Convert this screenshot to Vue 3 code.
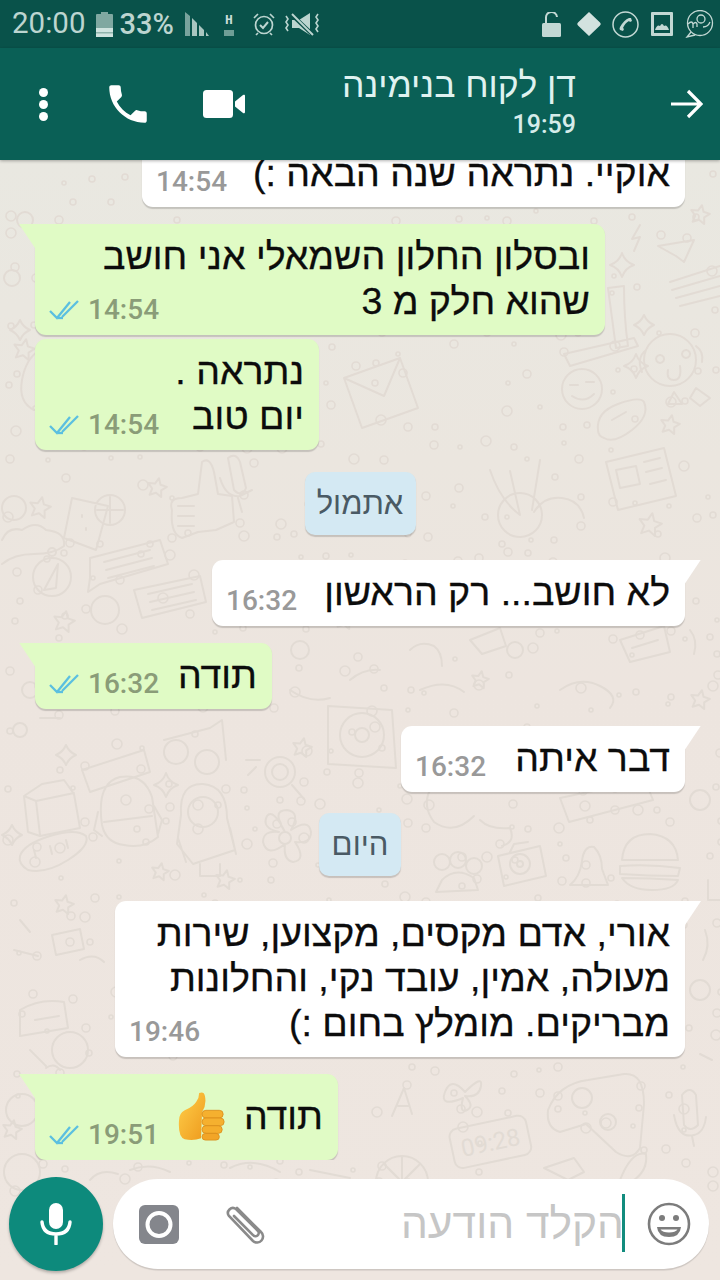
<script setup>
const c = (x, y, r) => `M${x - r} ${y}a${r} ${r} 0 1 0 ${2 * r} 0a${r} ${r} 0 1 0 ${-2 * r} 0`
const star = (x, y, r) => {
  let d = ''
  for (let i = 0; i < 10; i++) {
    const a = (Math.PI / 5) * i - Math.PI / 2 + 0.2
    const q = i % 2 ? r * 0.48 : r
    d += `${i ? 'L' : 'M'}${(x + q * Math.cos(a)).toFixed(1)} ${(y + q * Math.sin(a)).toFixed(1)}`
  }
  return d + 'Z'
}
const spark = (x, y, r) => `M${x} ${y - r}Q${x + 3} ${y - 3} ${x + r} ${y}Q${x + 3} ${y + 3} ${x} ${y + r}Q${x - 3} ${y + 3} ${x - r} ${y}Q${x - 3} ${y - 3} ${x} ${y - r}Z`

const doodles = [
  'M24 796l18-12 22-4 10 14 6 34-40 8-12-4z M24 796l12 5 38-8 M36 801l4 34',
  'M102 825q-6-42 18-48 24-4 32 20l6 40q-14 12-34 8-18-2-22-20z M98 812l-4 18 8 6 M154 806l8 14-4 14 M104 822l48-6 M82 770l62-20 6 22-60 20z',
  c(203, 812, 15) + 'M181 815q-2-32 22-31 24 2 24 34l8 32-42 14-16-20z M178 838l8 24 M230 828l6 26 M200 864v12h20v-12',
  'M20 856q4-12 30-20t36 0q4 10-18 24t-40 10q-10-6-8-14z M34 850l2 8 M50 846l2 8 M66 840l2 8',
  c(285, 838, 6) + 'M285 832q-14-22 2-22 14 2 4 20 18-12 20 2 0 12-16 10 12 18-2 20-10-2-8-18-18 14-22-2 0-12 16-10-18-4-12-16 6-8 18 16z',
  'M328 706l64 4 4 58-68-4z' + c(362, 735, 22) + c(362, 735, 7),
  c(280, 772, 15) + c(280, 772, 8) + 'M292 785l12 14 M246 760h14 M248 775l8-8',
  c(176, 752, 12) + c(207, 762, 12) + 'M164 740l46-12 12-8 4 40',
  star(225, 880, 10), star(302, 748, 10), star(64, 905, 10), star(160, 872, 9), spark(166, 785, 12), spark(12, 835, 10), spark(66, 755, 10),
  'M622 860q2-26 28-26 26 2 28 26z M620 866q30-2 60 2l-2 8q-30 0-58-2z M622 878q28 0 56 2-4 10-26 10t-30-12z',
  'M498 856l42-10 6 30-42 10z M510 852l4-8 14-2' + c(520, 864, 10) + c(520, 864, 3),
  'M570 885q10-8 12-24t12-14q8 8 8 22l6 16z',
  c(442, 862, 8) + c(458, 860, 8) + c(474, 866, 8) + 'M442 880q14-14 32-2l4 12-42 2z',
  'M560 798l85-18 8 20-84 22z',
  'M172 510q-4-12 10-12l16-4 4-32q8-6 12 10l4 22 14 2 2 26-18 8-18 2-16 6q-12-4-10-28z M178 506h16 M178 516h16 M178 526h16',
  'M72 498l36 8-12 44-32-12z' + c(110, 510, 15) + 'M110 497v26 M97 510h26 M82 515v2 M86 528v2',
  c(52, 577, 19) + c(52, 552, 4) + 'M44 590l14-26-2 24z',
  'M90 558l70-18 8 24-68 20-12 8 2-14z M104 562l46-12 M106 570l46-12 M108 578l46-12',
  'M134 590l66-14 6 26-64 16z M148 594l44-10 M150 602l44-10 M152 610l44-10',
  'M228 458q8-6 12 4l6 26q-4 10-12 2z M220 478q6 20 20 18l12-6 M238 498l4 14',
  'M2 540q6-14 20-10 14-10 24 0 20 2 18 16-10 8-30 8t-32 10',
  c(14, 508, 12), star(40, 508, 11), star(64, 622, 11), star(157, 488, 10),
  c(105, 610, 14),
  c(670, 360, 26) + 'M646 350q-10 8-4 22 M696 346q8 6 6 16 M660 355a4 4 0 1 0 .1 0 M686 350a4 4 0 1 0 .1 0 M668 370q-2 10 6 10t6-14 M674 392l-6 12h14z M696 388l-6 10 10 8 10-8z',
  c(582, 389, 20) + 'M570 385h8 M586 382h8 M572 396q12 8 22-2',
  'M598 430q-2-18 20-26t26-2q6 14-12 28t-28 8q-6-2-6-8z M612 420l14-8',
  'M606 462l58-14 12 48-58 14z M616 470l20-4 4 18-20 4z M644 462l16-4 M646 472l16-4 M650 484l16-4',
  'M344 378l56-20 18 50-56 20z M344 378l40 18 16-38',
  'M608 288l8 60 12-2q-4-28-4-60z M564 354l70-16 4 8-68 20z',
  'M658 246l36-6-10 22-8-6z',
  'M672 290l48-14 M676 298l44-12 M680 306l40-10 M670 282l50-16',
  star(700, 215, 10), spark(622, 265, 12), spark(644, 325, 10), spark(636, 366, 12), 'M640 225l-8 14 8-2-6 14',
  star(670, 425, 10), star(650, 525, 12),
  c(520, 515, 22) + 'M520 515l-10-44 M540 460l-8 50 M490 470q10 30 30 45',
  'M534 512q10-16 28-14t22 20',
  'M548 1110q10-26 40-30l36-6q20-2 20 30l-4 44q-8 14-24 4l-30-28-26 8q-14-4-12-22z' + c(582, 1098, 10) + c(608, 1122, 8),
  'M682 1095q8-10 14 0l2 30q-8 8-14 0z M674 1115q4 24 20 20 10-2 12-18 M692 1136l2 10',
  'M392 1116l12-28 8 26 M398 1106h10',
  'M465 1092q-14-16-20 0t18 6q-4 16 4 12t-2-14q14 2 16-10t-16 6z',
  c(402, 1182, 26) + 'M402 1156v26l-18-18 M402 1182l18-18',
  'M544 1168l30-10 10 14-16 8z M620 1180q12-30 26-26 2 16-12 26z',
  star(24, 350, 11), c(12, 278, 8), c(25, 220, 8), 'M40 350q-14 8-18 30t12 30', spark(20, 330, 10),
  star(12, 1130, 10), c(22, 1110, 16), c(22, 1172, 18), 'M90 1180q10-12 28-6',
  c(30, 690, 8), c(20, 730, 7), 'M60 718l-20 0',
  star(345, 620, 10), c(300, 650, 9), c(515, 650, 8), 'M470 640l30-12 6 18-24 8z', 'M620 640l44-14 6 26-40 10z M632 648l26-8', 'M560 690q20-14 40-4t10 22',
  'M410 650q10-10 24-4 8 6 8 20', 'M350 680q14-12 30-10', 'M290 690q20 14 40 8', 'M420 690q26-12 44 2', star(480, 680, 9), 'M690 630q8 10 4 24', star(700, 700, 10),
  'M480 820q10 10 30 8 6 14-8 18', c(700, 800, 10), 'M708 880v20h12', 'M430 790q-8 16 4 32 20 14 40-6',
  'M20 1010q20-12 44-8l4 26-48 8z M35 1020l24-4', 'M80 960q14-8 24 2', 'M20 920l10 12 M14 950l24 6', 'M52 935l28-6 4 20-28 6z', c(70, 1050, 18), 'M30 1050l16 16', c(700, 990, 10), 'M705 930q6 16-2 30', 'M712 1060l-12-6',
  'M60 1070q-6-8-14-2', 'M310 1170l40 8', 'M230 1168q24-12 50 4', 'M130 1170q20-8 40 2',
]

const dots = []
let seed = 17
const rnd = () => ((seed = (seed * 9301 + 49297) % 233280) / 233280)
for (let y = 172; y < 1180; y += 19) {
  for (let x = 6; x < 716; x += 26) {
    if (rnd() < 0.42) dots.push({ x: Math.round(x + rnd() * 16), y: Math.round(y + rnd() * 12), r: 2 + Math.round(rnd() * 3) })
  }
}

const messages = [
  { id: 1, kind: 'in', w: 543, lines: ['אוקיי. נתראה שנה הבאה :)'], time: '14:54', cut: true },
  { id: 2, kind: 'out', w: 570, lines: ['ובסלון החלון השמאלי אני חושב', 'שהוא חלק מ 3'], time: '14:54', first: true },
  { id: 3, kind: 'out', w: 284, lines: ['נתראה .', 'יום טוב'], time: '14:54' },
  { id: 4, kind: 'date', text: 'אתמול', w: 111 },
  { id: 5, kind: 'in', w: 473, lines: ['לא חושב... רק הראשון'], time: '16:32', first: true },
  { id: 6, kind: 'out', w: 237, lines: ['תודה'], time: '16:32', first: true },
  { id: 7, kind: 'in', w: 284, lines: ['דבר איתה'], time: '16:32', first: true },
  { id: 8, kind: 'date', text: 'היום', w: 82 },
  { id: 9, kind: 'in', w: 570, lines: ['אורי, אדם מקסים, מקצוען, שירות', 'מעולה, אמין, עובד נקי, והחלונות', 'מבריקים. מומלץ בחום :)'], time: '19:46', first: true },
  { id: 10, kind: 'out', w: 303, lines: ['תודה'], time: '19:51', first: true, thumb: true },
]
</script>

<template>
  <div class="phone">
    <div class="status">
      <div class="status-group">
        <span class="clock">20:00</span>
        <svg class="battery" width="17" height="26" viewBox="0 0 17 26">
          <path d="M5 1h7v2h4a1 1 0 0 1 1 1v21a1 1 0 0 1-1 1H1a1 1 0 0 1-1-1V4a1 1 0 0 1 1-1h4z" fill="#7fa8a1" />
          <rect y="17" width="17" height="9" fill="#cfe3df" />
          <rect y="21" width="17" height="1.5" fill="#8fb3ac" />
        </svg>
        <span class="pct">33%</span>
        <svg class="signal" width="24" height="24" viewBox="0 0 24 24" fill="#a9c6c0">
          <path d="M0 0l5 4v20H0z" opacity=".7" />
          <path d="M7 6l5 5v13H7z" />
          <path d="M14 13l5 5v6h-5z" />
          <path d="M21 20l3 4h-3z" />
        </svg>
        <span class="netw"><b>H</b><i></i></span>
        <svg class="alarm" width="22" height="24" viewBox="0 0 22 24" fill="none" stroke="#bcd5d0" stroke-width="1.7">
          <circle cx="11" cy="13" r="8.5" />
          <path d="M7 13l3 3 5-6" stroke-width="2" />
          <path d="M1 6l4-4M21 6l-4-4M5 21l-2 2M17 21l2 2" />
        </svg>
        <svg class="vib" width="36" height="26" viewBox="0 0 36 26" fill="none" stroke="#bcd5d0" stroke-width="1.6">
          <path d="M2 5l2 3-2 3 2 3-2 3 2 3" />
          <path d="M34 3l-2 3 2 3-2 3 2 3-2 3 2 3" />
          <path d="M8 9h7l11-7v22L15 17H8z" fill="#bcd5d0" stroke="none" />
          <path d="M7 3l22 21" stroke="#0a5048" stroke-width="4" />
          <path d="M8 3l21 21" stroke-width="2" />
        </svg>
      </div>
      <div class="status-group right">
        <svg width="20" height="25" viewBox="0 0 20 25" fill="#c3d8d4">
          <rect y="11" width="19" height="14" rx="1.5" />
          <path d="M4 11V6a5.5 5.5 0 0 1 11-1" fill="none" stroke="#c3d8d4" stroke-width="2" />
        </svg>
        <svg class="diamond" width="26" height="26" viewBox="0 0 26 26" fill="#d3e2df"><path d="M13 1l11 10.500a2 2 0 0 1 0 3L13 25 2 14.500a2 2 0 0 1 0-3z" /></svg>
        <svg width="27" height="27" viewBox="0 0 27 27" fill="none" stroke="#c3d8d4" stroke-width="1.5">
          <circle cx="13.500" cy="13.500" r="12.500" />
          <path d="M8 19q-1-1 0-3 4-7 9-9l2 0 1 3-2 1-1-1q-4 2-6 7l1 1-1 2z" fill="#c3d8d4" stroke="none" />
        </svg>
        <svg width="22" height="24" viewBox="0 0 22 24" fill="#c3d8d4">
          <path fill-rule="evenodd" d="M1 0h20a1 1 0 0 1 1 1v22a1 1 0 0 1-1 1H1a1 1 0 0 1-1-1V1a1 1 0 0 1 1-1zm2 3v18h16V3z" />
          <path d="M4 18q2-6 5-4 2-4 4 0 3-2 5 4z" />
        </svg>
        <svg width="29" height="28" viewBox="0 0 29 28" fill="none" stroke="#c3d8d4" stroke-width="1.300">
          <circle cx="15" cy="13" r="12.500" />
          <circle cx="16" cy="9" r="4" />
          <path d="M3 14q4-4 5 0v4M8 14q3-3 4 0v3M18 17q5 0 7-5M6 22l-4 5 8-2" />
        </svg>
      </div>
    </div>

    <header class="bar">
      <div class="dots"><i></i><i></i><i></i></div>
      <svg class="call" width="50" height="50" viewBox="0 0 24 24" fill="#fff">
        <path d="M6.620 10.790c1.440 2.830 3.760 5.140 6.590 6.590l2.200-2.200c.27-.27.67-.36 1.020-.24 1.120.37 2.330.57 3.570.57.55 0 1 .45 1 1V20c0 .55-.45 1-1 1-9.390 0-17-7.610-17-17 0-.55.45-1 1-1h3.500c.55 0 1 .45 1 1 0 1.250.2 2.450.57 3.570.11.35.03.74-.25 1.020l-2.200 2.200z" />
      </svg>
      <svg class="video" width="42" height="28" viewBox="0 0 42 28" fill="#fff">
        <rect x="0" y="0" width="30" height="28" rx="3.500" />
        <path d="M32 11.500l8-6.500a1.200 1.200 0 0 1 2 1v16a1.200 1.200 0 0 1-2 1l-8-6.500z" />
      </svg>
      <div class="contact" dir="rtl">
        <div class="name">דן לקוח בנימינה</div>
        <div class="seen">19:59</div>
      </div>
      <svg class="back" width="32" height="30" viewBox="0 0 32 30" fill="none" stroke="#fff" stroke-width="3.200">
        <path d="M0 15h29M17 2l13 13-13 13" />
      </svg>
    </header>

    <main class="chat" dir="rtl">
      <svg class="wall" width="720" height="1120" viewBox="0 160 720 1120" fill="none" stroke="#e2dbd4" stroke-width="2" stroke-linejoin="round" stroke-linecap="round" aria-hidden="true">
        <path v-for="(d, i) in doodles" :key="i" :d="d" />
        <circle v-for="(p, i) in dots" :key="'d' + i" :cx="p.x" :cy="p.y" :r="p.r" stroke-width="1.600" />
        <g transform="rotate(-12 490 1145)">
          <rect x="452" y="1122" width="78" height="40" rx="8" />
          <text x="491" y="1151" text-anchor="middle" fill="#e2dbd4" stroke="none" font-family="Roboto, sans-serif" font-size="24">09:28</text>
        </g>
      </svg>

      <div class="thread">
        <template v-for="m in messages" :key="m.id">
          <div v-if="m.kind === 'date'" class="chip" :style="{ width: m.w + 'px' }">{{ m.text }}</div>
          <div v-else class="bubble" :class="[m.kind, { first: m.first, tail: m.first, tall: m.thumb }]" :style="{ width: m.w + 'px' }">
            <div v-for="(l, i) in m.lines.slice(0, -1)" :key="i" class="line">{{ l }}</div>
            <div class="line last">
              <span class="txt">{{ m.lines[m.lines.length - 1] }}</span>
              <svg v-if="m.thumb" class="thumb" width="50" height="52" viewBox="0 0 52 54">
                <defs>
                  <linearGradient id="th" x1="0" y1="0" x2="1" y2="1">
                    <stop offset="0" stop-color="#ffcf4a" />
                    <stop offset="1" stop-color="#ee9a1d" />
                  </linearGradient>
                </defs>
                <path d="M1 30q0-8 6-11 9-4 12-9 3-4 3-9 5-2 6 3 2 9-3 17l-1 27q-8 3-17 1-7-2-6-19z" fill="url(#th)" />
                <rect x="25" y="19" width="22" height="8" rx="4" fill="#f5b02f" stroke="#d98a17" stroke-width=".8" />
                <rect x="25" y="27" width="23" height="8" rx="4" fill="#f5b02f" stroke="#d98a17" stroke-width=".8" />
                <rect x="25" y="35" width="21" height="8" rx="4" fill="#f5ad2c" stroke="#d98a17" stroke-width=".8" />
                <rect x="25" y="43" width="18" height="7" rx="3.500" fill="#f2a527" stroke="#d98a17" stroke-width=".8" />
              </svg>
              <span class="meta" dir="ltr">
                <svg v-if="m.kind === 'out'" class="ticks" width="31" height="20" viewBox="0 0 31 20" fill="none" stroke="#5bbfe0" stroke-width="2.300">
                  <path d="M1 11l7 7L21 2" />
                  <path d="M13 17L29 1" />
                  <path d="M9 18h5" />
                </svg>
                <span class="time">{{ m.time }}</span>
              </span>
            </div>
          </div>
        </template>
      </div>

      <div class="composer">
        <div class="field">
          <svg class="smile" width="44" height="44" viewBox="0 0 44 44" fill="none" stroke="#7c7c7c" stroke-width="2.600">
            <circle cx="22" cy="22" r="20" />
            <circle cx="15" cy="16" r="3" fill="#7c7c7c" stroke="none" />
            <circle cx="29" cy="16" r="3" fill="#7c7c7c" stroke="none" />
            <path d="M10 25h24q-1 10-12 10T10 25z" fill="#7c7c7c" stroke="none" />
            <path d="M13.500 27.500h17q-2 3-8.500 3t-8.500-3z" fill="#fff" stroke="none" />
          </svg>
          <i class="caret"></i>
          <span class="hint">הקלד הודעה</span>
          <svg class="clip" width="44" height="44" viewBox="0 0 44 44" fill="none" stroke="#8a8a8a" stroke-width="2.600" stroke-linecap="round">
            <path d="M14 6l24 24a6 6 0 0 1-8 9L6 14a5 5 0 0 1 7-7l22 22a3 3 0 0 1-5 4L11 14" />
          </svg>
          <svg class="cam" width="40" height="39" viewBox="0 0 40 39">
            <rect width="40" height="39" rx="6" fill="#84868c" />
            <circle cx="20" cy="19.500" r="11.500" fill="#84868c" stroke="#fff" stroke-width="4" />
          </svg>
        </div>
        <button class="mic" aria-label="mic">
          <svg width="32" height="42" viewBox="0 0 32 42" fill="none">
            <rect x="9" y="0" width="14" height="26" rx="7" fill="#fff" />
            <path d="M2 19q1 12 14 12t14-12M16 31v10" stroke="#fff" stroke-width="3.400" stroke-linecap="round" />
          </svg>
        </button>
      </div>
    </main>
  </div>
</template>

<style scoped>
.phone {
  width: 720px;
  height: 1280px;
  display: flex;
  flex-direction: column;
  overflow: hidden;
  font-family: "Liberation Sans", sans-serif;
}
.status {
  height: 48px;
  flex: none;
  background: #09524a;
  display: flex;
  justify-content: space-between;
  align-items: center;
  padding: 0 6px 0 12px;
  box-sizing: border-box;
  color: #bcd5d0;
  font-family: Roboto, sans-serif;
}
.status-group {
  display: flex;
  align-items: center;
}
.status-group.right {
  gap: 12px;
}
.diamond {
  margin-left: 2px;
  margin-right: -2px;
}
.clock {
  font-size: 29.500px;
  line-height: 48px;
  margin-right: 11px;
  margin-top: -3px;
}
.battery {
  margin-right: 6px;
}
.pct {
  font-size: 29px;
  font-weight: 500;
  margin-right: 11px;
}
.signal {
  margin-right: 14px;
}
.netw {
  display: flex;
  flex-direction: column;
  align-items: center;
  width: 12px;
  margin-right: 18px;
}
.netw b {
  font: 700 13px/13px "DejaVu Sans Mono", monospace;
  color: #c8dcd8;
}
.netw i {
  width: 10px;
  height: 6px;
  margin-top: 4px;
  background: #6f9e96;
}
.alarm {
  margin-right: 9px;
}
.bar {
  height: 112px;
  flex: none;
  background: #0a6056;
  display: flex;
  align-items: center;
  box-shadow: 0 1px 3px rgba(0, 0, 0, 0.3);
  position: relative;
  z-index: 2;
}
.dots {
  width: 10px;
  margin-left: 39px;
  display: flex;
  flex-direction: column;
  gap: 3px;
}
.dots i {
  width: 9px;
  height: 9px;
  border-radius: 50%;
  background: #fff;
}
.call {
  margin-left: 54px;
}
.video {
  margin-left: 50px;
}
.contact {
  flex: 1;
  text-align: right;
  direction: ltr;
  color: #dff2f0;
}
.name {
  direction: rtl;
  font-size: 35.500px;
  line-height: 48px;
  margin-top: -6px;
}
.seen {
  font: 500 25px/32px Roboto, sans-serif;
  color: #d5ecea;
}
.back {
  margin: 0 17px 0 95px;
}
.chat {
  flex: 1;
  min-height: 0;
  position: relative;
  display: flex;
  flex-direction: column;
  background: linear-gradient(#e9e8e1 0, #ebe6df 300px, #ede5df 520px, #eee6e0 100%);
}
.wall {
  position: absolute;
  top: 0;
  left: 0;
}
.thread {
  flex: 1;
  min-height: 0;
  overflow: hidden;
  display: flex;
  flex-direction: column;
  justify-content: flex-end;
  padding: 0 35px;
  position: relative;
}
.bubble {
  flex: none;
  box-sizing: border-box;
  padding: 10px 15px 11px 14px;
  border-radius: 11px;
  position: relative;
  font-size: 37.500px;
  line-height: 45px;
  color: #0c0c0c;
  box-shadow: 0 1.500px 1px rgba(0, 0, 0, 0.16);
  margin-top: 4px;
}
.bubble.first {
  margin-top: 17px;
}
.bubble.in {
  background: #fff;
  align-self: flex-start;
}
.bubble.out {
  background: #e0fbc5;
  align-self: flex-end;
}
.bubble.in.tail {
  border-top-right-radius: 0;
}
.bubble.out.tail {
  border-top-left-radius: 0;
}
.bubble.tail::before {
  content: "";
  position: absolute;
  top: 0;
  width: 16px;
  height: 24px;
  background: inherit;
}
.bubble.in.tail::before {
  left: 100%;
  clip-path: polygon(0 0, 100% 0, 0 100%);
}
.bubble.out.tail::before {
  right: 100%;
  clip-path: polygon(0 0, 100% 0, 100% 100%);
}
.line {
  white-space: nowrap;
}
.last {
  display: flex;
  align-items: flex-end;
}
.tall .last {
  line-height: 65px;
}
.txt {
  flex: none;
  -webkit-text-stroke: 0.3px #0c0c0c;
}
.line:not(.last) {
  -webkit-text-stroke: 0.3px #0c0c0c;
}
.thumb {
  margin: 0 16px 5px 0;
  flex: none;
}
.meta {
  margin-right: auto;
  display: flex;
  align-items: center;
  gap: 8px;
  height: 28px;
}
.ticks {
  flex: none;
}
.time {
  font: 500 28px/28px Roboto, sans-serif;
  color: #999;
}
.out .time {
  color: #8a9c78;
}
.chip {
  flex: none;
  height: 63px;
  align-self: center;
  box-sizing: border-box;
  margin: 21.500px 0 8px;
  background: #d4e9f3;
  border-radius: 10px;
  box-shadow: 0 1.500px 1px rgba(0, 0, 0, 0.16);
  text-align: center;
  font-size: 31px;
  line-height: 63px;
  color: #4a5a64;
}
.composer {
  flex: none;
  display: flex;
  align-items: center;
  gap: 10px;
  padding: 17px 11px 9px 9px;
  position: relative;
}
.field {
  flex: 1;
  height: 90px;
  border-radius: 45px;
  background: #fff;
  box-shadow: 0 1.500px 1px rgba(0, 0, 0, 0.14);
  display: flex;
  align-items: center;
  padding: 0 0 0 26px;
}
.smile {
  margin-right: 18px;
  margin-left: 22px;
  flex: none;
}
.caret {
  width: 3px;
  height: 58px;
  margin-top: -2px;
  background: #128c7e;
  flex: none;
}
.hint {
  font-size: 42.500px;
  color: #c6c6c6;
  margin-right: -2px;
  white-space: nowrap;
}
.clip {
  margin-right: auto;
  margin-left: 44px;
  flex: none;
}
.cam {
  flex: none;
}
.mic {
  width: 94px;
  height: 94px;
  flex: none;
  border: 0;
  padding: 0;
  border-radius: 50%;
  background: #0d8a7c;
  box-shadow: 0 2px 3px rgba(0, 0, 0, 0.25);
  display: flex;
  align-items: center;
  justify-content: center;
}
</style>
